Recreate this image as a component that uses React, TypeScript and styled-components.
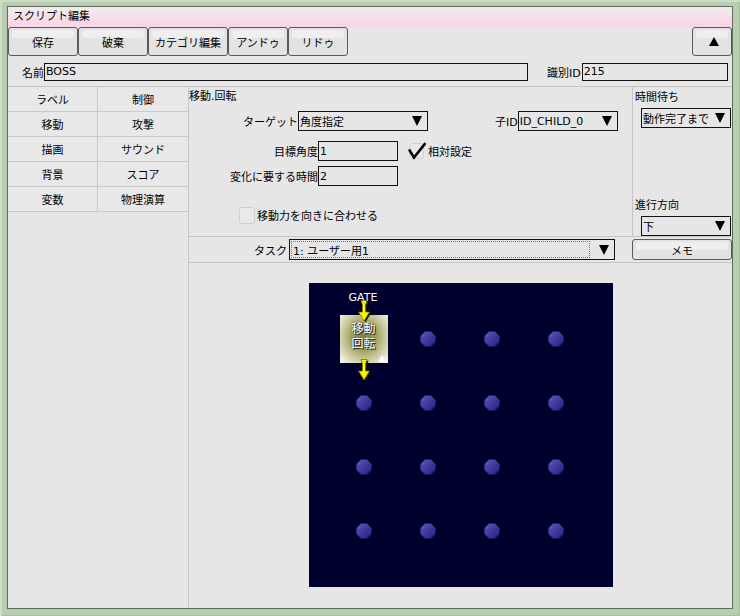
import React from "react";
import styled, { createGlobalStyle } from "styled-components";

const GlobalStyle = createGlobalStyle`
  html, body { margin: 0; padding: 0; background: #b8ceb0; }
  body {
    font-family: "DejaVu Sans", "Noto Sans CJK JP", sans-serif;
    font-size: 11px;
    color: #000;
  }
  * { box-sizing: border-box; }
`;

const Frame = styled.div`
  width: 740px;
  height: 616px;
  padding: 6px 7px 7px 7px;
  background: #b8ceb0;
  box-shadow: inset 2px 2px 0 #cfdbcb, inset -1px -1px 0 #a9c0a1;
`;

const Panel = styled.div`
  height: 100%;
  display: flex;
  flex-direction: column;
  border: 1px solid #5f6c5d;
  background: #e6e6e6;
`;

const TitleBar = styled.div`
  height: 20px;
  line-height: 20px;
  padding-left: 5px;
  background: linear-gradient(#f1ecef, #fbd2e6);
`;

const Toolbar = styled.div`
  height: 30px;
  display: flex;
  align-items: flex-start;
`;

const Button = styled.button<{ $w: number; $push?: boolean }>`
  position: relative;
  width: ${(p) => p.$w}px;
  height: 29px;
  margin-left: ${(p) => (p.$push ? "auto" : "0")};
  border: 1px solid #5a5a5a;
  border-radius: 3px;
  background: #e3e3e3;
  font: inherit;
  color: #000;
  padding: 0;
  display: flex;
  align-items: center;
  justify-content: center;
  &::before {
    content: "";
    position: absolute;
    top: 2px;
    left: 3px;
    right: 3px;
    height: 8px;
    border-radius: 3px;
    background: #efefef;
  }
  span { position: relative; }
`;

const UpTriangle = styled.span`
  width: 0;
  height: 0;
  border-left: 5px solid transparent;
  border-right: 5px solid transparent;
  border-bottom: 9px solid #000;
  margin-left: 3px;
`;

const NameRow = styled.div`
  height: 29px;
  display: flex;
  align-items: center;
  padding-left: 14px;
`;

const Label = styled.span<{ $w?: number; $ml?: number }>`
  display: inline-block;
  width: ${(p) => (p.$w ? `${p.$w}px` : "auto")};
  margin-left: ${(p) => p.$ml ?? 0}px;
  text-align: right;
  white-space: nowrap;
`;

const TextBox = styled.div<{ $w: number; $h?: number }>`
  width: ${(p) => p.$w}px;
  height: ${(p) => p.$h ?? 20}px;
  border: 1px solid #111;
  background: #e6e6e6;
  padding-left: 1px;
  display: flex;
  align-items: center;
  white-space: nowrap;
`;

const Body = styled.div`
  flex: 1;
  display: flex;
  border-top: 1px solid #c5c5c5;
`;

const LeftPanel = styled.div`
  width: 181px;
  border-right: 1px solid #c5c5c5;
`;

const CategoryGrid = styled.div`
  display: grid;
  grid-template-columns: 90px 90px;
`;

const Cell = styled.div`
  height: 25px;
  display: flex;
  align-items: center;
  justify-content: center;
  border-bottom: 1px solid #c9c9c9;
  background: #e8e8e8;
  &:nth-child(odd) { border-right: 1px solid #c9c9c9; }
`;

const Main = styled.div`
  flex: 1;
  display: flex;
  flex-direction: column;
`;

const TopSection = styled.div`
  height: 150px;
  display: flex;
  border-bottom: 1px solid #c5c5c5;
`;

const Editor = styled.div`
  flex: 1;
  display: flex;
  flex-direction: column;
`;

const Heading = styled.div`
  padding-top: 2px;
  line-height: 15px;
  height: 17px;
`;

const FormRow = styled.div<{ $mt: number; $pl?: number; $h?: number }>`
  margin-top: ${(p) => p.$mt}px;
  padding-left: ${(p) => p.$pl ?? 0}px;
  height: ${(p) => p.$h ?? 20}px;
  display: flex;
  align-items: center;
`;

const SelectBox = styled.div<{ $w: number; $h?: number; $ml?: number }>`
  width: ${(p) => p.$w}px;
  height: ${(p) => p.$h ?? 20}px;
  margin-left: ${(p) => p.$ml ?? 0}px;
  border: 1px solid #111;
  background: #e6e6e6;
  display: flex;
  align-items: center;
  padding: 0 5px 0 1px;
  white-space: nowrap;
`;

const SelectText = styled.span`
  flex: 1;
`;

const FocusText = styled.span`
  flex: 1;
  align-self: stretch;
  display: flex;
  align-items: center;
  margin: 1px 9px 1px 0;
  padding-left: 1px;
  border: 1px dotted #3c7fe0;
`;

const DownTriangle = styled.span`
  width: 0;
  height: 0;
  border-left: 5.5px solid transparent;
  border-right: 5.5px solid transparent;
  border-top: 10px solid #000;
`;

const CheckWrap = styled.span<{ $ml?: number }>`
  display: inline-flex;
  align-items: center;
  margin-left: ${(p) => p.$ml ?? 0}px;
  gap: 2px;
`;

const EmptyBox = styled.span`
  width: 16px;
  height: 17px;
  border: 1px solid #cfcfcf;
  border-radius: 3px;
  background: #e9e9e9;
`;

const RightCol = styled.div`
  width: 100px;
  border-left: 1px solid #c5c5c5;
  display: flex;
  flex-direction: column;
  padding: 3px 0 0 2px;
`;

const ColLabel = styled.div<{ $auto?: boolean }>`
  line-height: 16px;
  margin-top: ${(p) => (p.$auto ? "auto" : "0")};
`;

const TaskRow = styled.div`
  height: 26px;
  display: flex;
  align-items: center;
  border-bottom: 1px solid #c5c5c5;
`;

const CanvasArea = styled.div`
  flex: 1;
  display: flex;
  justify-content: center;
  align-items: flex-start;
  padding-top: 20px;
`;

const Canvas = styled.div`
  position: relative;
  width: 304px;
  height: 304px;
  background: #00002f;
  padding: 24px 0 0 23px;
`;

const DotGrid = styled.div`
  display: grid;
  grid-template-columns: repeat(4, 64px);
  grid-template-rows: repeat(4, 64px);
`;

const GridCell = styled.div`
  display: flex;
  align-items: center;
  justify-content: center;
`;

const Node = styled.div`
  position: relative;
  width: 48px;
  height: 48px;
  background: radial-gradient(ellipse at 50% 45%, #86863a 0%, #a0a058 35%, #d4d4b0 70%, #f7f7ee 95%);
  display: flex;
  flex-direction: column;
  align-items: center;
  justify-content: center;
  color: #fff;
  line-height: 15px;
  font-size: 12px;
  text-shadow: 1px 1px 0 #222, 0 0 2px #333;
  padding-bottom: 4px;
`;

const NodeMark = styled.span`
  position: absolute;
  right: 2px;
  bottom: 1px;
  width: 0;
  height: 0;
  border-left: 4px solid transparent;
  border-right: 4px solid transparent;
  border-bottom: 7px solid #fff;
`;

const Gate = styled.span`
  position: absolute;
  left: 40px;
  top: 8px;
  color: #fff;
`;

const ArrowSlot = styled.div<{ $top: number }>`
  position: absolute;
  left: 48px;
  top: ${(p) => p.$top}px;
  width: 16px;
  height: 23px;
`;

const Dot = () => (
  <svg width="16" height="16" viewBox="0 0 16 16">
    <defs>
      <linearGradient id="dg" x1="0" y1="0" x2="1" y2="1">
        <stop offset="0" stopColor="#5c5cc8" />
        <stop offset="0.4" stopColor="#4040a4" />
        <stop offset="1" stopColor="#22227a" />
      </linearGradient>
    </defs>
    <polygon points="5,0.5 11,0.5 15.5,5 15.5,11 11,15.5 5,15.5 0.5,11 0.5,5" fill="url(#dg)" />
  </svg>
);

const ARROW = "4,0.5 10,0.5 9,4 8.5,4 8.5,12 12.5,12 7,21 1.5,12 5.5,12 5.5,4 5,4";

const Arrow = () => (
  <svg width="16" height="23" viewBox="0 0 16 23">
    <polygon points={ARROW} fill="#1a1a00" transform="translate(1.5,1.2)" />
    <polygon points={ARROW} fill="#f4f400" stroke="#6a6a00" strokeWidth="0.7" />
    <line x1="6.3" y1="4" x2="6.3" y2="13" stroke="#ffff90" strokeWidth="0.8" />
  </svg>
);

const CheckedBox = () => (
  <svg width="18" height="18" viewBox="0 0 18 18">
    <rect x="1.5" y="1.5" width="14" height="15" rx="3" fill="#e9e9e9" stroke="#cfcfcf" />
    <path d="M1 7.5 L6 15.5 L17.5 1" fill="none" stroke="#000" strokeWidth="2.6" strokeLinejoin="miter" />
  </svg>
);

const categories = ["ラベル", "制御", "移動", "攻撃", "描画", "サウンド", "背景", "スコア", "変数", "物理演算"];

export default function App() {
  const cells = Array.from({ length: 16 }, (_, i) => i);
  return (
    <>
      <GlobalStyle />
      <Frame>
        <Panel>
          <TitleBar>スクリプト編集</TitleBar>
          <Toolbar>
            <Button $w={70}><span>保存</span></Button>
            <Button $w={70}><span>破棄</span></Button>
            <Button $w={80}><span>カテゴリ編集</span></Button>
            <Button $w={60}><span>アンドゥ</span></Button>
            <Button $w={60}><span>リドゥ</span></Button>
            <Button $w={40} $push><UpTriangle /></Button>
          </Toolbar>
          <NameRow>
            <Label>名前</Label>
            <TextBox $w={484} $h={18}>BOSS</TextBox>
            <Label $ml={19}>識別ID</Label>
            <TextBox $w={146} $h={18} style={{ marginLeft: 1 }}>215</TextBox>
          </NameRow>
          <Body>
            <LeftPanel>
              <CategoryGrid>
                {categories.map((c) => (
                  <Cell key={c}>{c}</Cell>
                ))}
              </CategoryGrid>
            </LeftPanel>
            <Main>
              <TopSection>
                <Editor>
                  <Heading>移動.回転</Heading>
                  <FormRow $mt={7}>
                    <Label $w={109}>ターゲット</Label>
                    <SelectBox $w={130}>
                      <SelectText>角度指定</SelectText>
                      <DownTriangle />
                    </SelectBox>
                    <Label $ml={67}>子ID</Label>
                    <SelectBox $w={100}>
                      <SelectText>ID_CHILD_0</SelectText>
                      <DownTriangle />
                    </SelectBox>
                  </FormRow>
                  <FormRow $mt={10}>
                    <Label $w={129}>目標角度</Label>
                    <TextBox $w={80}>1</TextBox>
                    <CheckWrap $ml={10}>
                      <CheckedBox />
                      相対設定
                    </CheckWrap>
                  </FormRow>
                  <FormRow $mt={5}>
                    <Label $w={129}>変化に要する時間</Label>
                    <TextBox $w={80}>2</TextBox>
                  </FormRow>
                  <FormRow $mt={20} $pl={50} $h={18}>
                    <CheckWrap>
                      <EmptyBox />
                      移動力を向きに合わせる
                    </CheckWrap>
                  </FormRow>
                </Editor>
                <RightCol>
                  <ColLabel>時間待ち</ColLabel>
                  <SelectBox $w={90} $ml={6} style={{ marginTop: 2 }}>
                    <SelectText>動作完了まで</SelectText>
                    <DownTriangle />
                  </SelectBox>
                  <ColLabel $auto>進行方向</ColLabel>
                  <SelectBox $w={90} $ml={6} style={{ marginTop: 2 }}>
                    <SelectText>下</SelectText>
                    <DownTriangle />
                  </SelectBox>
                </RightCol>
              </TopSection>
              <TaskRow>
                <Label $w={98}>タスク</Label>
                <SelectBox $w={326} $h={21} $ml={2}>
                  <FocusText>1: ユーザー用1</FocusText>
                  <DownTriangle />
                </SelectBox>
                <Button $w={100} style={{ height: 21, marginLeft: 17 }}>
                  <span>メモ</span>
                </Button>
              </TaskRow>
              <CanvasArea>
                <Canvas>
                  <DotGrid>
                    {cells.map((i) => (
                      <GridCell key={i}>
                        {i === 0 ? (
                          <Node>
                            <span>移動</span>
                            <span>回転</span>
                            <NodeMark />
                          </Node>
                        ) : (
                          <Dot />
                        )}
                      </GridCell>
                    ))}
                  </DotGrid>
                  <Gate>GATE</Gate>
                  <ArrowSlot $top={17}><Arrow /></ArrowSlot>
                  <ArrowSlot $top={76}><Arrow /></ArrowSlot>
                </Canvas>
              </CanvasArea>
            </Main>
          </Body>
        </Panel>
      </Frame>
    </>
  );
}
